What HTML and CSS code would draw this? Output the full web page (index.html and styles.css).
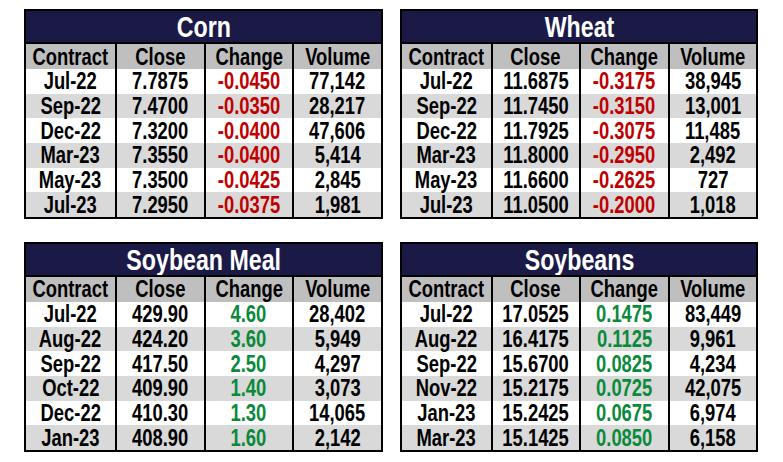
FILE: index.html
```html
<!DOCTYPE html>
<html lang="en">
<head>
<meta charset="utf-8">
<title>Grain Futures</title>
<link rel="stylesheet" href="styles.css">
</head>
<body>
<main class="board">
  <section class="quote">
    <h2 class="quote-title"><span class="t">Corn</span></h2>
    <div class="row head"><div class="c"><span class="t">Contract</span></div><div class="c"><span class="t">Close</span></div><div class="c"><span class="t">Change</span></div><div class="c"><span class="t">Volume</span></div></div>
    <div class="row"><div class="c"><span class="t">Jul-22</span></div><div class="c"><span class="t">7.7875</span></div><div class="c neg"><span class="t">-0.0450</span></div><div class="c"><span class="t">77,142</span></div></div>
    <div class="row"><div class="c"><span class="t">Sep-22</span></div><div class="c"><span class="t">7.4700</span></div><div class="c neg"><span class="t">-0.0350</span></div><div class="c"><span class="t">28,217</span></div></div>
    <div class="row"><div class="c"><span class="t">Dec-22</span></div><div class="c"><span class="t">7.3200</span></div><div class="c neg"><span class="t">-0.0400</span></div><div class="c"><span class="t">47,606</span></div></div>
    <div class="row"><div class="c"><span class="t">Mar-23</span></div><div class="c"><span class="t">7.3550</span></div><div class="c neg"><span class="t">-0.0400</span></div><div class="c"><span class="t">5,414</span></div></div>
    <div class="row"><div class="c"><span class="t">May-23</span></div><div class="c"><span class="t">7.3500</span></div><div class="c neg"><span class="t">-0.0425</span></div><div class="c"><span class="t">2,845</span></div></div>
    <div class="row"><div class="c"><span class="t">Jul-23</span></div><div class="c"><span class="t">7.2950</span></div><div class="c neg"><span class="t">-0.0375</span></div><div class="c"><span class="t">1,981</span></div></div>
  </section>
  <section class="quote">
    <h2 class="quote-title"><span class="t">Wheat</span></h2>
    <div class="row head"><div class="c"><span class="t">Contract</span></div><div class="c"><span class="t">Close</span></div><div class="c"><span class="t">Change</span></div><div class="c"><span class="t">Volume</span></div></div>
    <div class="row"><div class="c"><span class="t">Jul-22</span></div><div class="c"><span class="t">11.6875</span></div><div class="c neg"><span class="t">-0.3175</span></div><div class="c"><span class="t">38,945</span></div></div>
    <div class="row"><div class="c"><span class="t">Sep-22</span></div><div class="c"><span class="t">11.7450</span></div><div class="c neg"><span class="t">-0.3150</span></div><div class="c"><span class="t">13,001</span></div></div>
    <div class="row"><div class="c"><span class="t">Dec-22</span></div><div class="c"><span class="t">11.7925</span></div><div class="c neg"><span class="t">-0.3075</span></div><div class="c"><span class="t">11,485</span></div></div>
    <div class="row"><div class="c"><span class="t">Mar-23</span></div><div class="c"><span class="t">11.8000</span></div><div class="c neg"><span class="t">-0.2950</span></div><div class="c"><span class="t">2,492</span></div></div>
    <div class="row"><div class="c"><span class="t">May-23</span></div><div class="c"><span class="t">11.6600</span></div><div class="c neg"><span class="t">-0.2625</span></div><div class="c"><span class="t">727</span></div></div>
    <div class="row"><div class="c"><span class="t">Jul-23</span></div><div class="c"><span class="t">11.0500</span></div><div class="c neg"><span class="t">-0.2000</span></div><div class="c"><span class="t">1,018</span></div></div>
  </section>
  <section class="quote">
    <h2 class="quote-title"><span class="t">Soybean Meal</span></h2>
    <div class="row head"><div class="c"><span class="t">Contract</span></div><div class="c"><span class="t">Close</span></div><div class="c"><span class="t">Change</span></div><div class="c"><span class="t">Volume</span></div></div>
    <div class="row"><div class="c"><span class="t">Jul-22</span></div><div class="c"><span class="t">429.90</span></div><div class="c pos"><span class="t">4.60</span></div><div class="c"><span class="t">28,402</span></div></div>
    <div class="row"><div class="c"><span class="t">Aug-22</span></div><div class="c"><span class="t">424.20</span></div><div class="c pos"><span class="t">3.60</span></div><div class="c"><span class="t">5,949</span></div></div>
    <div class="row"><div class="c"><span class="t">Sep-22</span></div><div class="c"><span class="t">417.50</span></div><div class="c pos"><span class="t">2.50</span></div><div class="c"><span class="t">4,297</span></div></div>
    <div class="row"><div class="c"><span class="t">Oct-22</span></div><div class="c"><span class="t">409.90</span></div><div class="c pos"><span class="t">1.40</span></div><div class="c"><span class="t">3,073</span></div></div>
    <div class="row"><div class="c"><span class="t">Dec-22</span></div><div class="c"><span class="t">410.30</span></div><div class="c pos"><span class="t">1.30</span></div><div class="c"><span class="t">14,065</span></div></div>
    <div class="row"><div class="c"><span class="t">Jan-23</span></div><div class="c"><span class="t">408.90</span></div><div class="c pos"><span class="t">1.60</span></div><div class="c"><span class="t">2,142</span></div></div>
  </section>
  <section class="quote">
    <h2 class="quote-title"><span class="t">Soybeans</span></h2>
    <div class="row head"><div class="c"><span class="t">Contract</span></div><div class="c"><span class="t">Close</span></div><div class="c"><span class="t">Change</span></div><div class="c"><span class="t">Volume</span></div></div>
    <div class="row"><div class="c"><span class="t">Jul-22</span></div><div class="c"><span class="t">17.0525</span></div><div class="c pos"><span class="t">0.1475</span></div><div class="c"><span class="t">83,449</span></div></div>
    <div class="row"><div class="c"><span class="t">Aug-22</span></div><div class="c"><span class="t">16.4175</span></div><div class="c pos"><span class="t">0.1125</span></div><div class="c"><span class="t">9,961</span></div></div>
    <div class="row"><div class="c"><span class="t">Sep-22</span></div><div class="c"><span class="t">15.6700</span></div><div class="c pos"><span class="t">0.0825</span></div><div class="c"><span class="t">4,234</span></div></div>
    <div class="row"><div class="c"><span class="t">Nov-22</span></div><div class="c"><span class="t">15.2175</span></div><div class="c pos"><span class="t">0.0725</span></div><div class="c"><span class="t">42,075</span></div></div>
    <div class="row"><div class="c"><span class="t">Jan-23</span></div><div class="c"><span class="t">15.2425</span></div><div class="c pos"><span class="t">0.0675</span></div><div class="c"><span class="t">6,974</span></div></div>
    <div class="row"><div class="c"><span class="t">Mar-23</span></div><div class="c"><span class="t">15.1425</span></div><div class="c pos"><span class="t">0.0850</span></div><div class="c"><span class="t">6,158</span></div></div>
  </section>
</main>
</body>
</html>
```

FILE: styles.css
```css
* { box-sizing: border-box; }

html, body {
  margin: 0;
  padding: 0;
  background: #ffffff;
}

body {
  font-family: "Liberation Sans", Arial, sans-serif;
  font-weight: bold;
  color: #000;
}

.board {
  display: grid;
  grid-template-columns: 359px 358px;
  column-gap: 17px;
  row-gap: 23px;
  padding: 9px 0 0 24px;
}

.quote {
  border: 2px solid #000;
  display: flex;
  flex-direction: column;
}

/* condensed face: no narrow family installed, so the glyph run is compressed */
.t {
  display: inline-block;
  white-space: nowrap;
  transform: scaleX(0.8);
  transform-origin: center;
}

.quote-title {
  margin: 0;
  height: 33px;
  background: #1b1a47;
  color: #fff;
  border-bottom: 2px solid #000;
  font-size: 29px;
  line-height: 32px;
  text-align: center;
  font-weight: bold;
  display: flex;
  justify-content: center;
  overflow: hidden;
}

.row {
  display: grid;
  grid-template-columns: repeat(4, 1fr);
  height: 24.67px;
  background: #fff;
}

.row:nth-child(even) {
  background: #d9d9d9;
}

.row.head {
  height: 25px;
  background: #bfbfbf;
}

.c {
  display: flex;
  align-items: center;
  justify-content: center;
  font-size: 23px;
  line-height: 1;
  min-width: 0;
  padding-top: 1px;
}

.c + .c {
  border-left: 2px solid #000;
}

.neg { color: #c00000; }
.pos { color: #0a8a3a; }
```
